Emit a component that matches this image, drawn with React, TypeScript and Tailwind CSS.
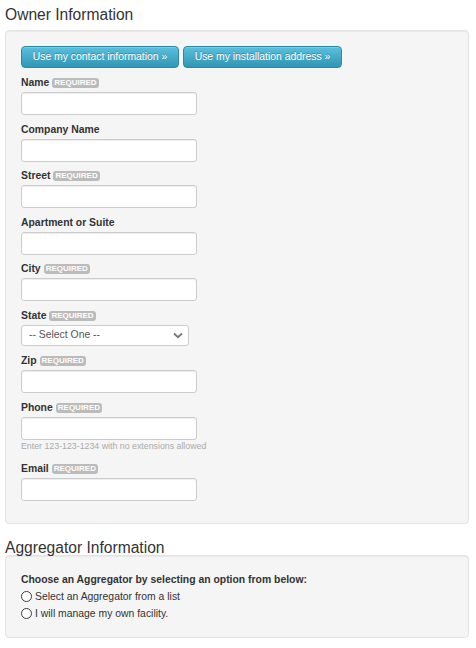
import { ReactNode } from "react";

const Badge = () => (
  <span className="ml-[3px] inline-block h-[10px] rounded-[3px] bg-[#bbbbbb] px-[2px] text-[8px] font-bold leading-[10px] text-white">
    REQUIRED
  </span>
);

const FieldLabel = ({ text, required }: { text: string; required?: boolean }) => (
  <div className="mb-[2px] flex h-[14px] items-center text-[10.4px] font-bold leading-[14px] text-[#333]">
    <span>{text}</span>
    {required && <Badge />}
  </div>
);

const TextInput = ({ last }: { last?: boolean }) => (
  <div
    className={`h-[23px] w-[176px] rounded-[3px] border border-[#cccccc] bg-white shadow-[inset_0_1px_1px_rgba(0,0,0,0.075)] ${
      last ? "mb-[7px]" : "mb-[7.5px]"
    }`}
  />
);

const Field = ({ label, required }: { label: string; required?: boolean }) => (
  <div>
    <FieldLabel text={label} required={required} />
    <TextInput />
  </div>
);

const InfoButton = ({ children, width }: { children: ReactNode; width: string }) => (
  <button
    className={`${width} h-[22px] rounded-[4px] border border-[#2a8aa6] bg-linear-to-b from-[#5bc0de] to-[#2f96b4] text-center text-[10.4px] leading-[20px] text-white [text-shadow:0_-1px_0_rgba(0,0,0,0.25)] shadow-[inset_0_1px_0_rgba(255,255,255,0.2)]`}
  >
    {children}
  </button>
);

const Radio = ({ label }: { label: string }) => (
  <label className="flex h-[17px] items-center text-[10.4px] text-[#333]">
    <span className="h-[11px] w-[11px] rounded-full border border-[#3a3a3a] bg-white" />
    <span className="ml-[3px]">{label}</span>
  </label>
);

const App = () => {
  return (
    <div
      className="min-h-[648px] w-[476px] bg-white pl-[5px] pr-[7px] pt-[8px]"
      style={{ fontFamily: '"Liberation Sans", Arial, Helvetica, sans-serif' }}
    >
      <h2 className="mb-[8px] text-[15.6px] leading-[14px] text-[#333]">Owner Information</h2>

      <div className="rounded-[4px] border border-[#e3e3e3] bg-[#f5f5f5] px-[15px] pb-[15px] pt-[15px] shadow-[inset_0_1px_1px_rgba(0,0,0,0.05)]">
        <div className="mb-[8px] flex gap-[4px]">
          <InfoButton width="w-[158px]">Use my contact information »</InfoButton>
          <InfoButton width="w-[159px]">Use my installation address »</InfoButton>
        </div>

        <Field label="Name" required />
        <Field label="Company Name" />
        <Field label="Street" required />
        <Field label="Apartment or Suite" />
        <Field label="City" required />

        <div>
          <FieldLabel text="State" required />
          <div className="mb-[8.5px] flex h-[21px] w-[168px] items-center justify-between rounded-[3px] border border-[#cccccc] bg-white pl-[7px] pr-[5px] text-[10.4px] text-[#555]">
            <span>-- Select One --</span>
            <svg width="10" height="7" viewBox="0 0 10 7" fill="none">
              <path d="M1 1.5 L5 5.2 L9 1.5" stroke="#777" strokeWidth="1.8" />
            </svg>
          </div>
        </div>

        <Field label="Zip" required />

        <div>
          <FieldLabel text="Phone" required />
          <div className="h-[23px] w-[176px] rounded-[3px] border border-[#cccccc] bg-white shadow-[inset_0_1px_1px_rgba(0,0,0,0.075)]" />
          <p className="mb-[10.5px] text-[8.8px] leading-[12px] text-[#aaaaaa]">
            Enter 123-123-1234 with no extensions allowed
          </p>
        </div>

        <div>
          <FieldLabel text="Email" required />
          <TextInput last />
        </div>
      </div>

      <h2 className="mt-[17px] text-[15.6px] leading-[14px] text-[#333]">Aggregator Information</h2>

      <div className="rounded-[4px] border border-[#e3e3e3] bg-[#f5f5f5] px-[15px] py-[15px] shadow-[inset_0_1px_1px_rgba(0,0,0,0.05)]">
        <p className="text-[10.4px] font-bold leading-[17px] text-[#333]">
          Choose an Aggregator by selecting an option from below:
        </p>
        <Radio label="Select an Aggregator from a list" />
        <Radio label="I will manage my own facility." />
      </div>
    </div>
  );
};

export default App;
